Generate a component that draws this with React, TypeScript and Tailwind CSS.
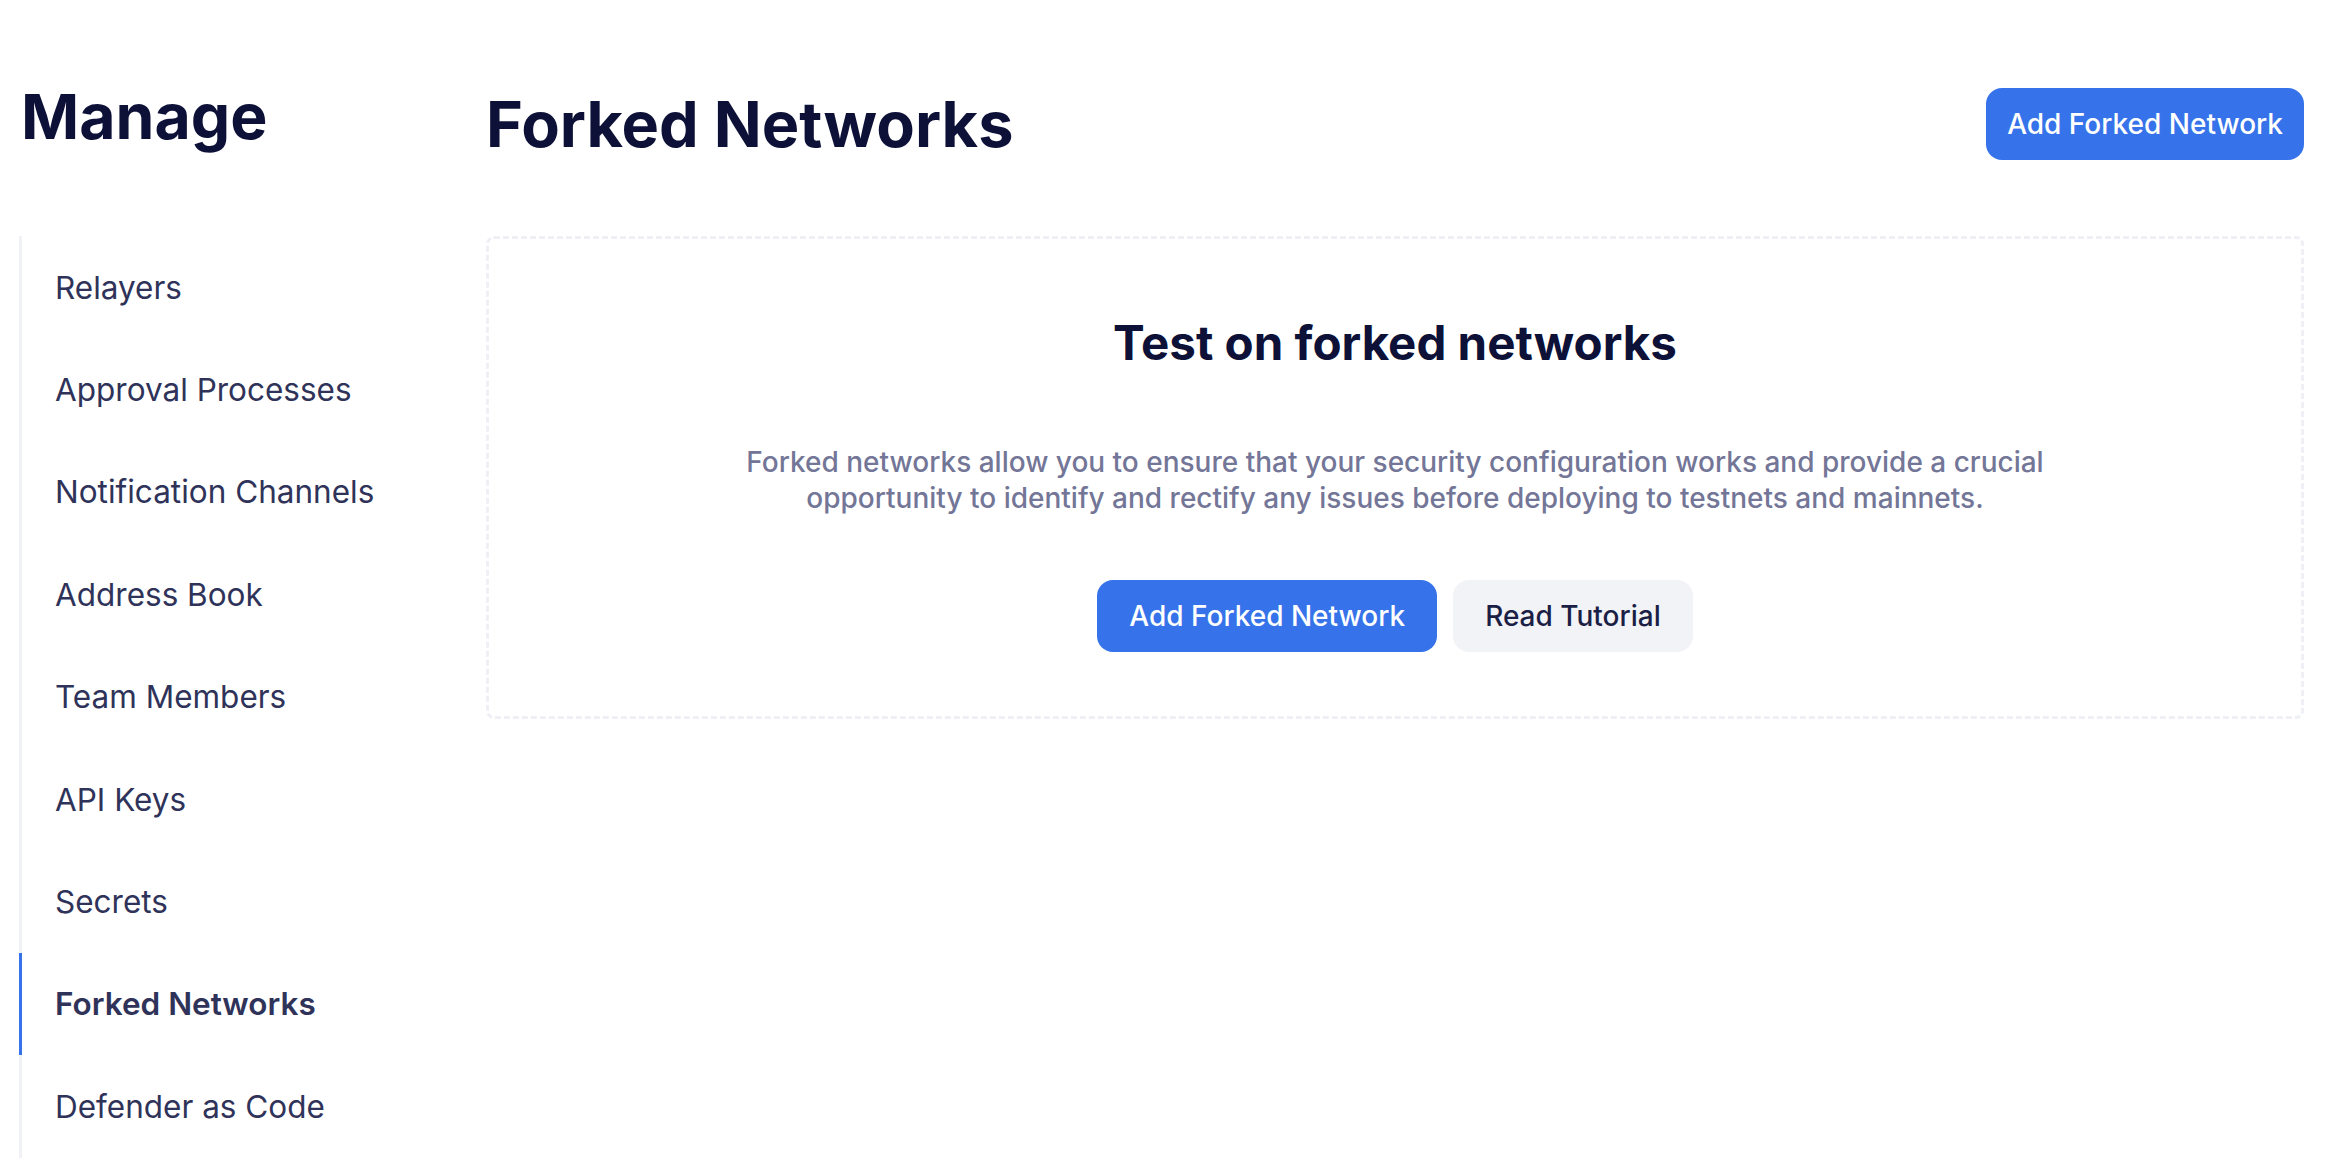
const items = [
  "Relayers",
  "Approval Processes",
  "Notification Channels",
  "Address Book",
  "Team Members",
  "API Keys",
  "Secrets",
  "Forked Networks",
  "Defender as Code",
];

function Sidebar({ active }: { active: string }) {
  return (
    <aside className="w-[467px] shrink-0">
      <h1 className="ml-[2px] mt-[76px] text-[62.5px] font-bold leading-[80px] text-[#0d1137]">
        Manage
      </h1>

      <ul className="mt-[80px] flex flex-col border-l-[3px] border-[#f1f2f6]">
        {items.map((item) => (
          <li
            key={item}
            className={`-ml-[3px] flex h-[102.4px] items-center border-l-[3px] pl-[33px] text-[31.5px] text-[#2f3359] ${
              item === active
                ? "border-[#3673ea] font-semibold"
                : "border-transparent"
            }`}
          >
            {item}
          </li>
        ))}
      </ul>
    </aside>
  );
}

function EmptyState() {
  return (
    <div className="mt-[76px] flex flex-col items-center rounded-lg border-[3px] border-dashed border-[#eef0f5] pb-[64px] pt-[76px]">
      <h2 className="text-[47.5px] font-bold leading-[56px] text-[#0d1137]">
        Test on forked networks
      </h2>
      <p className="mt-[73px] max-w-[1320px] text-center text-[28px] font-medium leading-[36px] text-[#737697]">
        Forked networks allow you to ensure that your security configuration
        works and provide a crucial opportunity to identify and rectify any
        issues before deploying to testnets and mainnets.
      </p>
      <div className="mt-[64px] flex gap-4">
        <button className="h-[72px] rounded-2xl bg-[#3673ea] px-8 text-[28px] font-medium text-white">
          Add Forked Network
        </button>
        <button className="h-[72px] rounded-2xl bg-[#f2f3f7] px-8 text-[28px] font-medium text-[#1c1f45]">
          Read Tutorial
        </button>
      </div>
    </div>
  );
}

export default function App() {
  return (
    <div className="flex min-h-screen bg-white pl-[19px] pr-[36px] font-['Inter',sans-serif]">
      <Sidebar active="Forked Networks" />

      <main className="flex-1">
        <div className="mt-[88px] flex items-center justify-between">
          <h1 className="text-[63px] font-bold leading-[72px] text-[#0d1137]">
            Forked Networks
          </h1>
          <button className="h-[72px] rounded-2xl bg-[#3673ea] px-[21px] text-[28px] font-medium text-white">
            Add Forked Network
          </button>
        </div>

        <EmptyState />
      </main>
    </div>
  );
}
